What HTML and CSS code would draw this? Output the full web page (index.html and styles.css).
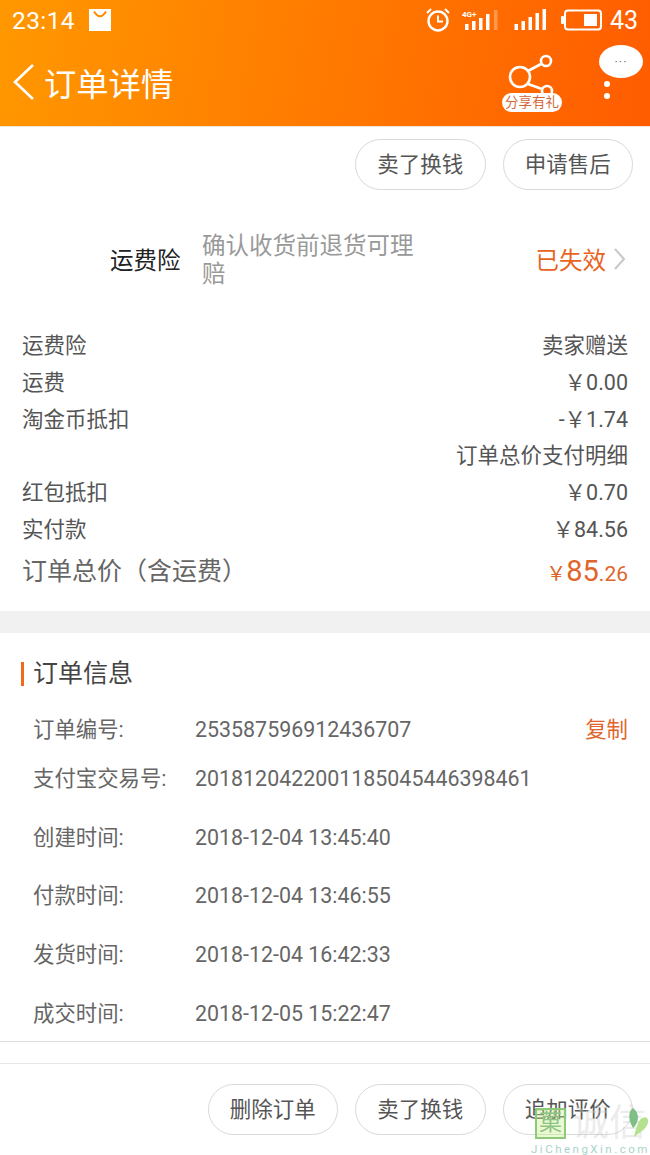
FILE: index.html
```html
<!DOCTYPE html>
<html lang="zh-CN">
<head>
  <meta charset="UTF-8" />
  <meta name="viewport" content="width=device-width, initial-scale=1.0"/>
  <title>订单详情</title>
  <link rel="stylesheet" href="styles.css">
</head>
<body>
  <header class="top">
    <div class="status-bar">
      <div class="status-left">
        <span class="clock">23:14</span>
        <svg class="bag-icon" width="22" height="22" viewBox="0 0 22 22">
          <rect width="22" height="22" fill="#fff"/>
          <path d="M5 2.5 Q11 12 17 2.5" fill="none" stroke="#ff8a00" stroke-width="2"/>
        </svg>
      </div>
      <div class="status-right">
        <svg class="alarm" width="26" height="26" viewBox="0 0 26 26" fill="none" stroke="#fff">
          <circle cx="13" cy="14" r="9.5" stroke-width="2.4"/>
          <path d="M13 8.5V14.5H18" stroke-width="2"/>
          <path d="M2 6L6 2M24 6L20 2" stroke-width="2"/>
        </svg>
        <svg class="signal-first" width="36" height="22" viewBox="0 0 36 22" fill="#fff">
          <text x="0" y="8" class="net-label">4G+</text>
          <rect x="3" y="15" width="3.5" height="6"/>
          <rect x="10" y="12" width="3.5" height="9"/>
          <rect x="17" y="9" width="3.5" height="12"/>
          <rect x="24" y="5" width="3.5" height="16"/>
          <rect x="32" y="1" width="3.5" height="20" opacity=".3"/>
        </svg>
        <svg class="signal-second" width="33" height="22" viewBox="0 0 33 22" fill="#fff">
          <rect x="0.5" y="15" width="3.5" height="6"/>
          <rect x="7.5" y="12" width="3.5" height="9"/>
          <rect x="14.5" y="8" width="3.5" height="13"/>
          <rect x="21.5" y="4" width="3.5" height="17"/>
          <rect x="28.5" y="0" width="3.5" height="21"/>
        </svg>
        <svg class="battery" width="41" height="22" viewBox="0 0 41 22">
          <rect x="4" y="1.5" width="36" height="19" rx="3" fill="none" stroke="#fff" stroke-width="2"/>
          <rect x="0" y="7" width="3" height="8" rx="1" fill="#fff"/>
          <rect x="23" y="5" width="13" height="12" fill="#fff"/>
        </svg>
        <span class="battery-level">43</span>
      </div>
    </div>
    <div class="nav-bar">
      <svg class="back-icon" width="24" height="38" viewBox="0 0 24 38" fill="none" stroke="#fff" stroke-width="2.6">
        <path d="M21 2L3 19L21 36"/>
      </svg>
      <h1 class="nav-title">订单详情</h1>
      <div class="share">
        <svg width="56" height="46" viewBox="0 0 56 46" fill="none" stroke="#fff" stroke-width="2.6">
          <circle cx="18" cy="24" r="10"/>
          <circle cx="44" cy="8" r="5"/>
          <circle cx="45" cy="38" r="5"/>
          <path d="M26 18L39 11M26 31L40 36"/>
        </svg>
        <span class="share-tag">分享有礼</span>
      </div>
      <div class="more">
        <span class="more-bubble">···</span>
        <span class="more-dot"></span>
        <span class="more-dot"></span>
      </div>
    </div>
  </header>

  <div class="actions actions-top">
    <span class="pill">卖了换钱</span>
    <span class="pill">申请售后</span>
  </div>

  <div class="insurance">
    <span class="insurance-label">运费险</span>
    <span class="insurance-note">确认收货前退货可理赔</span>
    <span class="insurance-state">已失效</span>
    <svg class="chevron" width="13" height="22" viewBox="0 0 13 22" fill="none" stroke="#c8c8c8" stroke-width="2">
      <path d="M2 1L11 11L2 21"/>
    </svg>
  </div>

  <section class="prices">
    <div class="price-row"><span>运费险</span><span>卖家赠送</span></div>
    <div class="price-row"><span>运费</span><span>￥0.00</span></div>
    <div class="price-row"><span>淘金币抵扣</span><span>-￥1.74</span></div>
    <div class="price-row"><span></span><span>订单总价支付明细</span></div>
    <div class="price-row"><span>红包抵扣</span><span>￥0.70</span></div>
    <div class="price-row"><span>实付款</span><span>￥84.56</span></div>
    <div class="total-row">
      <span class="total-label">订单总价（含运费）</span>
      <span class="total-value"><small class="yen">￥</small><b>85</b><small>.26</small></span>
    </div>
  </section>

  <div class="band"></div>

  <section class="info">
    <h2 class="info-title">订单信息</h2>
    <div class="info-row row-first"><span class="info-key">订单编号:</span><span class="info-val">253587596912436707</span><span class="copy">复制</span></div>
    <div class="info-row"><span class="info-key">支付宝交易号:</span><span class="info-val">2018120422001185045446398461</span></div>
    <div class="info-row"><span class="info-key">创建时间:</span><span class="info-val">2018-12-04 13:45:40</span></div>
    <div class="info-row"><span class="info-key">付款时间:</span><span class="info-val">2018-12-04 13:46:55</span></div>
    <div class="info-row"><span class="info-key">发货时间:</span><span class="info-val">2018-12-04 16:42:33</span></div>
    <div class="info-row"><span class="info-key">成交时间:</span><span class="info-val">2018-12-05 15:22:47</span></div>
  </section>

  <div class="strip"></div>

  <div class="actions actions-bottom">
    <span class="pill">删除订单</span>
    <span class="pill">卖了换钱</span>
    <span class="pill">追加评价</span>
  </div>

  <!-- site watermark sits over the footer -->
  <div class="watermark">
    <div class="mark-top">
      <span class="mark-box">菓</span>
      <span class="mark-text">诚信</span>
      <svg class="mark-leaf" width="22" height="30" viewBox="0 0 22 30">
        <path d="M5 0C0 3 0 12 5 20C10 16 13 6 5 0Z" fill="#7fbf86"/>
        <path d="M6 29C12 24 21 20 20 12C19 8 14 9 12 12C10 14 8 20 6 29Z" fill="#b5e08e"/>
      </svg>
    </div>
    <div class="mark-url">JiChengXin.com</div>
  </div>
</body>
</html>
```

FILE: styles.css
```css
* {
  box-sizing: border-box;
}

html, body {
  margin: 0;
  padding: 0;
}

body {
  width: 650px;
  height: 1155px;
  position: relative;
  overflow: hidden;
  background: #fff;
  color: #555;
  font-family: 'Roboto', 'Noto Sans CJK SC', sans-serif;
  font-size: 21.5px;
}

.top {
  height: 127px;
  background: linear-gradient(100deg, #ff9800 0%, #ff7a00 50%, #ff5c00 100%);
  border-bottom: 1px solid #f3e3d3;
  color: #fff;
}

.status-bar {
  height: 40px;
  padding: 0 12px;
  display: flex;
  align-items: center;
  justify-content: space-between;
}

.status-left {
  display: flex;
  align-items: center;
  gap: 14px;
}

.clock {
  font-size: 24.5px;
  letter-spacing: .4px;
}

.status-right {
  display: flex;
  align-items: center;
}

.alarm {
  margin-right: 11px;
}

.signal-first {
  margin-right: 16px;
}

.signal-second {
  margin-right: 14px;
}

.net-label {
  font-size: 8px;
  font-weight: 700;
}

.battery {
  margin-right: 8px;
}

.battery-level {
  font-size: 25px;
}

.nav-bar {
  height: 86px;
  padding: 0 0 2px 12px;
  display: flex;
  align-items: center;
  position: relative;
}

.nav-title {
  margin: 0 0 0 8px;
  font-size: 32.3px;
  font-weight: 400;
}

.share {
  position: absolute;
  left: 502px;
  top: 13px;
  width: 60px;
  height: 59px;
}

.share svg {
  display: block;
}

.share-tag {
  position: absolute;
  left: 0;
  bottom: 0;
  width: 60px;
  height: 19px;
  line-height: 19px;
  background: #fff;
  border-radius: 10px;
  color: #d2683a;
  font-size: 13.5px;
  text-align: center;
  white-space: nowrap;
}

.more {
  position: absolute;
  left: 599px;
  top: 5px;
  width: 44px;
  display: flex;
  flex-direction: column;
  align-items: flex-start;
}

.more-bubble {
  width: 44px;
  height: 33px;
  line-height: 33px;
  border-radius: 50%;
  background: #fff;
  color: #777;
  font-size: 13px;
  letter-spacing: 1px;
  text-align: center;
  margin-bottom: 3px;
}

.more-dot {
  width: 6px;
  height: 6px;
  margin: 0 0 6px 5px;
  border-radius: 50%;
  background: #fff;
}

.actions {
  display: flex;
  justify-content: flex-end;
  gap: 17px;
  padding-right: 17px;
}

.actions-top {
  padding-top: 12px;
}

.actions-bottom {
  padding-top: 20px;
}

.pill {
  width: 130.5px;
  height: 51px;
  line-height: 49px;
  border: 1px solid #d9d9d9;
  border-radius: 26px;
  background: #fff;
  color: #555;
  text-align: center;
}

.insurance {
  margin-top: 41px;
  height: 58px;
  padding: 0 24px 0 110px;
  display: flex;
  align-items: center;
}

.insurance-label {
  width: 92px;
  padding-bottom: 2px;
  font-size: 23.5px;
  color: #222;
}

.insurance-note {
  width: 215px;
  font-size: 23.5px;
  line-height: 28px;
  color: #999;
}

.insurance-state {
  margin-left: auto;
  padding-bottom: 3px;
  font-size: 23.5px;
  color: #e8641f;
}

.chevron {
  margin: 0 0 2px 7px;
}

.prices {
  margin-top: 39px;
  padding: 0 22px;
}

.price-row {
  height: 36.8px;
  line-height: 36.8px;
  display: flex;
  justify-content: space-between;
}

.total-row {
  margin-top: 2px;
  height: 38px;
  display: flex;
  justify-content: space-between;
  align-items: center;
}

.total-label {
  padding-bottom: 2px;
  font-size: 25px;
  color: #666;
}

.total-value {
  padding-top: 6px;
  color: #e0652a;
  font-size: 22px;
  line-height: 38px;
}

.total-value b {
  font-size: 29px;
  font-weight: 400;
}

.total-value .yen {
  font-size: 20px;
}

.total-value small {
  font-size: 21px;
}

.band {
  height: 22px;
  margin-top: 22px;
  background: #f1f1f1;
}

.info {
  height: 409px;
  padding-left: 33px;
  border-bottom: 1px solid #dcdcdc;
}

.info-title {
  position: relative;
  margin: 0;
  padding-top: 25px;
  height: 81px;
  font-size: 25px;
  font-weight: 400;
  line-height: 32px;
  color: #444;
}

.info-title::before {
  content: "";
  position: absolute;
  left: -12px;
  top: 29px;
  width: 3px;
  height: 24px;
  background: #ef6a1c;
}

.info-row {
  height: 58.6px;
  line-height: 32px;
  font-size: 21.4px;
  display: flex;
}

.row-first {
  height: 49.5px;
}

.info-key {
  width: 162px;
  color: #666;
}

.info-val {
  color: #666;
}

.copy {
  margin-left: auto;
  margin-right: 22px;
  color: #e0652a;
}

.strip {
  height: 22px;
  border-bottom: 1px solid #e6e6e6;
}

.watermark {
  position: absolute;
  left: 535px;
  top: 1107px;
  width: 115px;
}

.mark-top {
  position: relative;
  height: 33px;
  display: flex;
  align-items: center;
}

.mark-box {
  width: 31px;
  height: 31px;
  line-height: 26px;
  border: 2px solid #8ec97a;
  background: rgba(200, 240, 140, .4);
  color: #8fc487;
  font-size: 23px;
  text-align: center;
}

.mark-text {
  margin-left: 6px;
  font-size: 37px;
  line-height: 33px;
  color: rgba(205, 205, 205, .4);
  white-space: nowrap;
}

.mark-leaf {
  position: absolute;
  left: 93px;
  top: 1px;
}

.mark-url {
  margin: 3px 0 0 -4px;
  font-size: 11.5px;
  line-height: 12px;
  letter-spacing: 2.5px;
  color: #a9d3c9;
  white-space: nowrap;
}
```
